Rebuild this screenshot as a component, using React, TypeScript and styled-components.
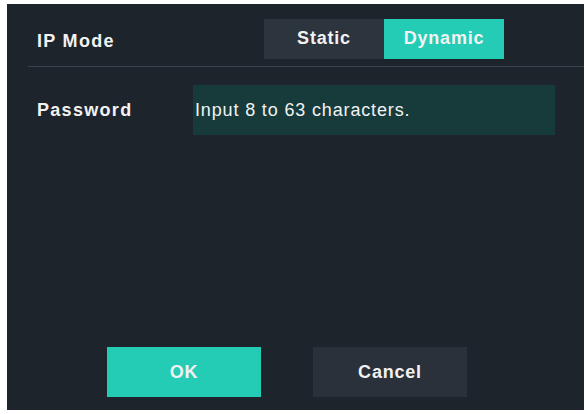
import styled, { createGlobalStyle } from 'styled-components';

const GlobalStyle = createGlobalStyle`
  html, body {
    margin: 0;
    padding: 0;
    background: #ffffff;
  }

  body {
    font-family: 'Liberation Sans', Arial, sans-serif;
  }
`;

const App = () => (
  <>
    <GlobalStyle />
    <Panel>
      <HeaderRow>
        <Label width={227} offset={4}>IP Mode</Label>
        <Segmented>
          <SegmentButton>Static</SegmentButton>
          <SegmentButton active>Dynamic</SegmentButton>
        </Segmented>
      </HeaderRow>
      <Divider />
      <FieldRow>
        <Label width={156}>Password</Label>
        <Input>Input 8 to 63 characters.</Input>
      </FieldRow>
      <Footer>
        <ActionButton primary>OK</ActionButton>
        <ActionButton>Cancel</ActionButton>
      </Footer>
    </Panel>
  </>
);

const Panel = styled.div`
  margin: 4px 3px 4px 7px;
  width: 577px;
  height: 406px;
  background: #1e242c;
  display: flex;
  flex-direction: column;
  color: #f2f2f2;
`;

const HeaderRow = styled.div`
  display: flex;
  align-items: center;
  height: 62px;
  padding: 8px 0 0 30px;
  box-sizing: border-box;
`;

const Label = styled.div<{ width: number; offset?: number }>`
  flex: 0 0 ${props => props.width}px;
  padding-top: ${props => props.offset || 0}px;
  font-size: 18px;
  font-weight: bold;
  letter-spacing: 1.3px;
`;

const Segmented = styled.div`
  display: flex;
  margin-top: -1px;
`;

const SegmentButton = styled.div<{ active?: boolean }>`
  width: 120px;
  height: 40px;
  display: flex;
  align-items: center;
  justify-content: center;
  font-size: 18px;
  font-weight: bold;
  letter-spacing: 0.8px;
  background: ${props => (props.active ? '#24ccb6' : '#2c343d')};
`;

const Divider = styled.div`
  height: 1px;
  margin-left: 21px;
  background: #3a414a;
`;

const FieldRow = styled.div`
  display: flex;
  align-items: center;
  margin-top: 18px;
  padding-left: 30px;
`;

const Input = styled.div`
  width: 362px;
  height: 50px;
  display: flex;
  align-items: center;
  padding: 1px 0 0 2px;
  box-sizing: border-box;
  background: #173b3b;
  font-size: 18px;
  letter-spacing: 0.85px;
`;

const Footer = styled.div`
  margin-top: auto;
  display: flex;
  gap: 52px;
  padding: 0 0 13px 100px;
`;

const ActionButton = styled.div<{ primary?: boolean }>`
  width: 154px;
  height: 50px;
  display: flex;
  align-items: center;
  justify-content: center;
  font-size: 18px;
  font-weight: bold;
  letter-spacing: 0.8px;
  background: ${props => (props.primary ? '#24ccb6' : '#2a313a')};
`;

export default App;
